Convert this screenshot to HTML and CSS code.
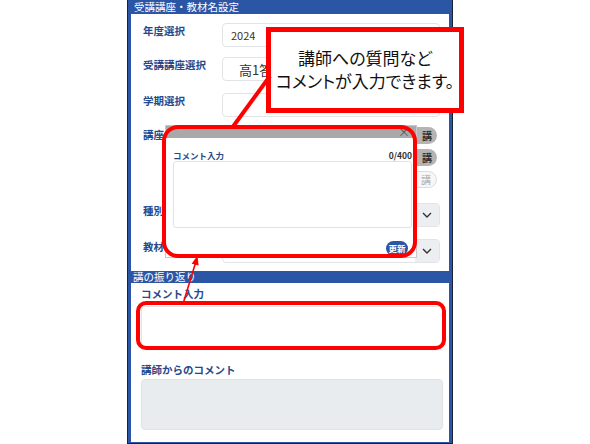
FILE: index.html
```html
<!DOCTYPE html>
<html lang="ja">
<head>
  <meta charset="UTF-8">
  <title>受講講座・教材名設定</title>
  <link rel="stylesheet" href="styles.css">
</head>
<body>
  <div class="page">
    <div class="panel">
      <div class="panel-title">受講講座・教材名設定</div>
      <div class="panel-body">
        <div class="form">
          <div class="row">
            <div class="label">年度選択</div>
            <div class="select"><span class="val">2024</span></div>
          </div>
          <div class="row row-wide">
            <div class="label">受講講座選択</div>
            <div class="select"><span class="val val-big">高1答案練習講座</span></div>
          </div>
          <div class="row">
            <div class="label">学期選択</div>
            <div class="select"></div>
          </div>
          <div class="row row-lessons">
            <div class="label">講座</div>
            <div class="lessons">
              <span class="tag">講</span>
              <span class="tag">講</span>
              <span class="tag tag-off">講</span>
            </div>
          </div>
          <div class="row row-wide">
            <div class="label">種別</div>
            <div class="select">
              <span class="caret"><svg width="10" height="6" viewBox="0 0 10 6"><polyline points="1,1 5,5 9,1" fill="none" stroke="#333" stroke-width="1.4"/></svg></span>
            </div>
          </div>
          <div class="row">
            <div class="label">教材</div>
            <div class="select">
              <span class="caret"><svg width="10" height="6" viewBox="0 0 10 6"><polyline points="1,1 5,5 9,1" fill="none" stroke="#333" stroke-width="1.4"/></svg></span>
            </div>
          </div>
        </div>

        <div class="section-title">講の振り返り</div>
        <div class="review">
          <div class="label">コメント入力</div>
          <div class="textarea"></div>
          <div class="label label-gap">講師からのコメント</div>
          <div class="readonly"></div>
        </div>
      </div>
    </div>

    <!-- comment popup -->
    <div class="modal">
      <div class="modal-head"><span class="close">×</span></div>
      <div class="modal-body">
        <div class="modal-row">
          <span class="modal-label">コメント入力</span>
          <span class="count">0/400</span>
        </div>
        <div class="modal-text"></div>
        <div class="modal-actions"><span class="btn">更新</span></div>
      </div>
    </div>

    <!-- annotations -->
    <div class="mark mark-modal"></div>
    <div class="mark mark-input"></div>
    <div class="callout">講師への質問など<br>コメントが入力できます。</div>
    <svg class="pointers" width="590" height="444" viewBox="0 0 590 444">
      <line x1="270" y1="76" x2="232" y2="128" stroke="#f00" stroke-width="4"/>
      <line x1="183" y1="304" x2="195.5" y2="263" stroke="#f00" stroke-width="1.6"/>
      <polygon points="197.5,255.5 198.6,265.6 191.7,263.8" fill="#f00"/>
    </svg>
  </div>
</body>
</html>
```

FILE: styles.css
```css
* {
  margin: 0;
  padding: 0;
  box-sizing: border-box;
}

body {
  background: #fff;
  font-family: "Noto Sans CJK JP", "Noto Sans", sans-serif;
}

.page {
  position: relative;
  width: 590px;
  height: 444px;
  overflow: hidden;
}

/* main panel */
.panel {
  margin-left: 127px;
  width: 326px;
  height: 444px;
  background: #2b55a5;
  border: 1px solid #1b2233;
  border-top: none;
  padding: 0 3px 3px 3px;
  display: flex;
  flex-direction: column;
}

.panel-title {
  height: 14px;
  line-height: 14px;
  color: #fff;
  font-size: 10.5px;
  padding-left: 3px;
}

.panel-body {
  flex: 1;
  background: #fff;
}

.form {
  padding: 9px 9px 8px 12px;
}

.row {
  display: flex;
  align-items: flex-start;
  margin-bottom: 10px;
}
.row-wide {
  margin-bottom: 12px;
}
.row-lessons {
  margin-bottom: 15px;
}
.row:last-child {
  margin-bottom: 0;
}

.label {
  width: 79px;
  flex-shrink: 0;
  padding-top: 1px;
  font-size: 10.5px;
  line-height: 14px;
  font-weight: bold;
  color: #27498a;
}

.select {
  position: relative;
  flex: 1;
  height: 24px;
  border: 1px solid #e2e4e7;
  border-radius: 4px;
  background: #fff;
  display: flex;
  align-items: center;
}

.val {
  padding-left: 8px;
  font-size: 11px;
  color: #333;
}
.val-big {
  padding-left: 16px;
  font-size: 13px;
  white-space: nowrap;
}

.caret {
  margin-left: auto;
  width: 24px;
  height: 22px;
  background: #eceef1;
  border-radius: 0 3px 3px 0;
  display: flex;
  align-items: center;
  justify-content: center;
}

.lessons {
  flex: 1;
  display: flex;
  flex-direction: column;
  align-items: flex-end;
  gap: 5px;
  padding-right: 3px;
}

.tag {
  width: 34px;
  height: 17px;
  line-height: 17px;
  border-radius: 9px;
  background: #b4b4b4;
  color: #333;
  font-size: 10px;
  font-weight: bold;
  text-align: right;
  padding-right: 5px;
}
.tag-off {
  background: #f7f7f7;
  border: 1px solid #dcdcdc;
  line-height: 15px;
  color: #aaa;
  font-weight: normal;
}

.section-title {
  height: 12px;
  line-height: 12px;
  background: #2b55a5;
  color: #fff;
  font-size: 10.5px;
  padding-left: 2px;
}

.review {
  padding: 4px 6px 12px 10px;
}

.review .label {
  width: auto;
  padding-top: 0;
}

.textarea {
  margin-top: 5px;
  height: 43px;
  border: 1px solid #e2e4e7;
  border-radius: 4px;
}

.label-gap {
  margin-top: 14px;
}

.readonly {
  margin-top: 2px;
  height: 51px;
  background: #e9ecef;
  border: 1px solid #e0e3e6;
  border-radius: 4px;
}

/* popup */
.modal {
  position: absolute;
  left: 165px;
  top: 125px;
  width: 252px;
  height: 133px;
  background: #fff;
  border: 1px solid #c8c8c8;
}

.modal-head {
  height: 12px;
  background: #a9a9a9;
  position: relative;
}
.close {
  position: absolute;
  right: 6px;
  top: -3px;
  font-size: 12px;
  color: #555;
}

.modal-body {
  padding: 11px 4px 0 7px;
}

.modal-row {
  display: flex;
  justify-content: space-between;
  font-size: 8.5px;
  line-height: 12px;
  font-weight: bold;
}
.modal-label {
  color: #27498a;
}
.count {
  color: #333;
}

.modal-text {
  height: 67px;
  border: 1px solid #dfe2e6;
  border-radius: 3px;
}

.modal-actions {
  margin-top: 5px;
  text-align: right;
  padding-right: 4px;
}
.btn {
  display: inline-block;
  width: 22px;
  height: 15px;
  line-height: 15px;
  border-radius: 8px;
  background: #2b55a5;
  color: #fff;
  font-size: 8.5px;
  font-weight: bold;
  text-align: center;
}

/* red annotations */
.mark {
  position: absolute;
  border: 4px solid #f00;
}
.mark-modal {
  left: 162px;
  top: 125px;
  width: 255px;
  height: 133px;
  border-radius: 16px;
}
.mark-input {
  left: 136px;
  top: 301px;
  width: 310px;
  height: 49px;
  border-radius: 10px;
}

.callout {
  position: absolute;
  left: 266px;
  top: 27px;
  width: 198px;
  height: 86px;
  border: 5px solid #f00;
  background: #fff;
  display: flex;
  align-items: center;
  justify-content: center;
  text-align: center;
  padding-bottom: 3px;
  font-size: 17px;
  line-height: 23px;
  color: #111;
  font-feature-settings: "palt";
}

.pointers {
  position: absolute;
  left: 0;
  top: 0;
  pointer-events: none;
}
```
